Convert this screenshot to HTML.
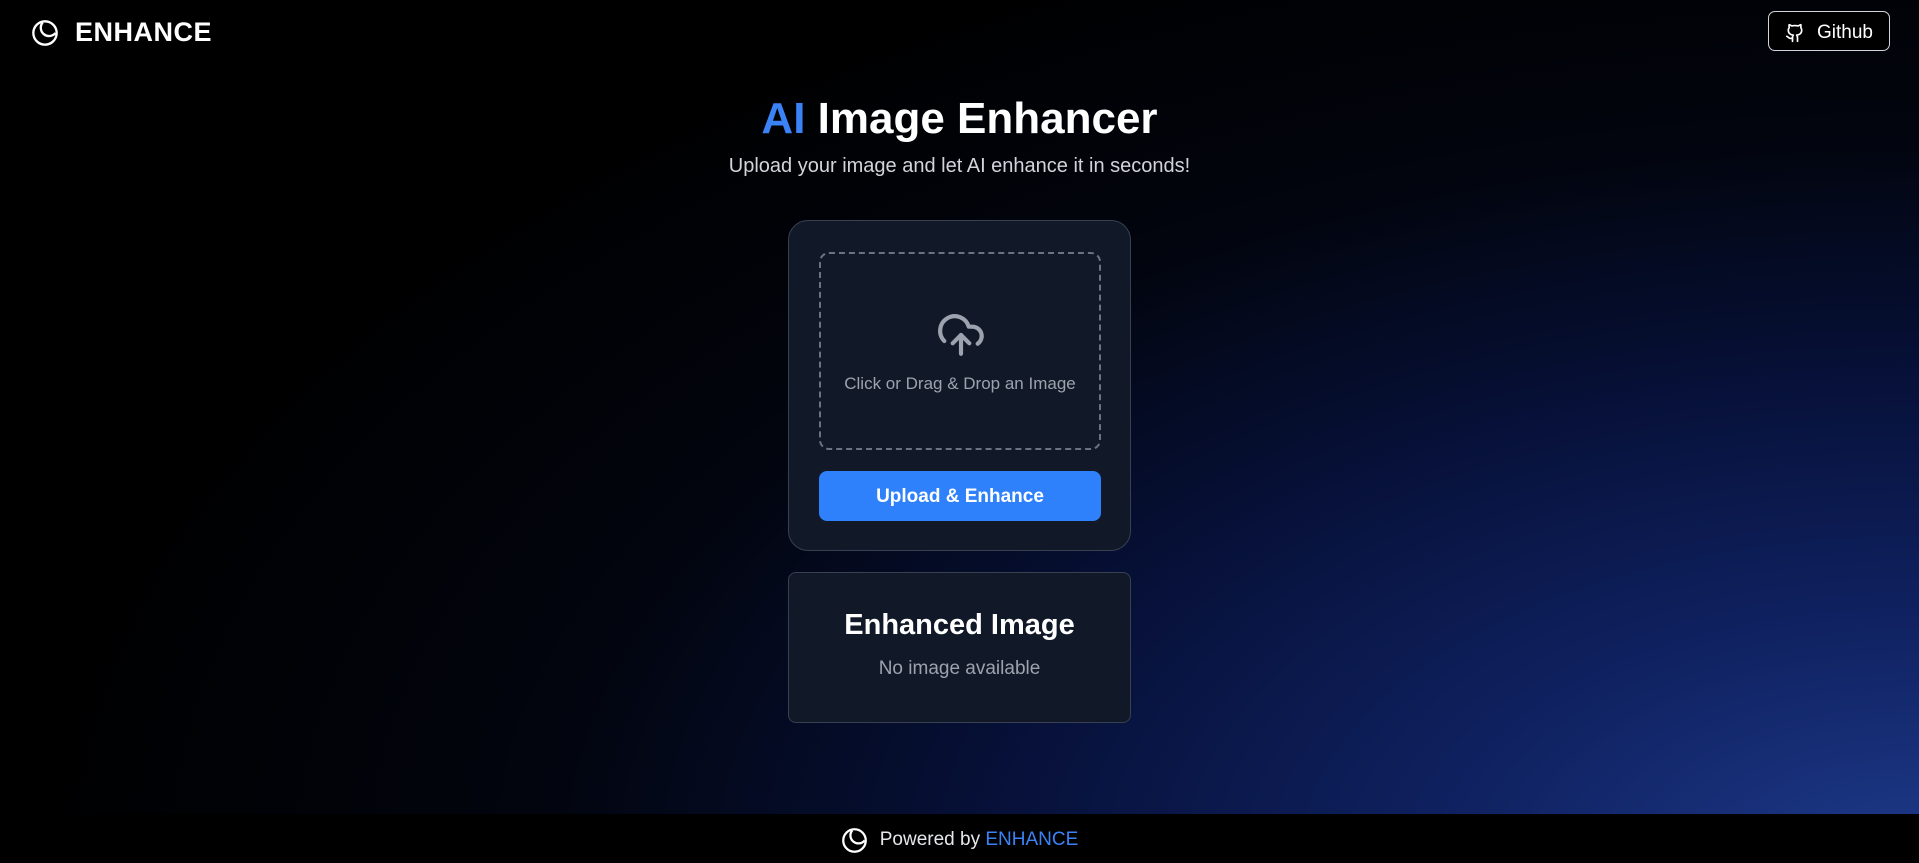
<!DOCTYPE html>
<html><head><meta charset="utf-8"><style>
*{margin:0;padding:0;box-sizing:border-box}
html,body{width:1919px;height:863px;overflow:hidden}
body{font-family:"Liberation Sans",sans-serif;color:#fff;position:relative;
background:radial-gradient(ellipse 1900px 1000px at 1919px 863px,#1e3a8a 0%,#0f2160 25%,#07113a 48%,#02050f 72%,#000 100%);}
.logo{position:absolute;left:31px;top:17px;display:flex;align-items:center;gap:16px;font-weight:bold;font-size:27px;letter-spacing:0.5px}
.gh{position:absolute;left:1768px;top:11px;width:122px;height:40px;border:1.5px solid #d1d5db;border-radius:7px;background:#000;display:flex;align-items:center;justify-content:center;gap:12px;font-size:19px;padding-top:3px}
h1{position:absolute;left:0;right:0;top:94px;text-align:center;font-size:44px;font-weight:bold}
h1 span{color:#3b82f6}
.sub{position:absolute;left:0;right:0;top:155px;text-align:center;font-size:20px;color:#d1d5db}
.card{position:absolute;left:788px;width:343px;background:#111827;border:1px solid #374151;border-radius:20px}
.drop{position:absolute;left:30px;top:31px;width:282px;height:198px;border:2px dashed #6b7280;border-radius:10px;text-align:center}
.drop p{position:absolute;top:120px;left:0;right:0;color:#9ca3af;font-size:17px}
.btn{position:absolute;left:30px;top:250px;width:282px;height:50px;background:#2e80fb;border-radius:8px;text-align:center;line-height:52px;font-weight:bold;font-size:19px}
.c2{top:572px;height:151px;border-radius:8px;text-align:center}
.c2 h2{margin-top:36px;font-size:29px;font-weight:bold}
.c2 p{margin-top:16px;font-size:19px;color:#9ca3af}
.foot{position:absolute;left:0;top:814px;width:1919px;height:49px;background:#000;display:flex;align-items:center;justify-content:center;gap:12px;font-size:19px;color:#e5e7eb;padding-top:3px}
.foot span{color:#3b82f6}
</style></head><body>
<div class="logo"><svg width="28" height="28" viewBox="0 0 24 24" fill="none" stroke="#fff" stroke-width="2"><circle cx="12" cy="12" r="10"/><path d="M10 3 A7 7 0 0 0 21 12"/></svg>ENHANCE</div>
<div class="gh"><svg width="20" height="20" viewBox="0 0 24 24" fill="none" stroke="#fff" stroke-width="2" stroke-linecap="round" stroke-linejoin="round"><path d="M15 22v-4a4.8 4.8 0 0 0-1-3.5c3 0 6-2 6-5.5.08-1.25-.27-2.48-1-3.5.28-1.150.28-2.35 0-3.5 0 0-1 0-3 1.5-2.64-.5-5.36-.5-8 0C6 2 5 2 5 2c-.3 1.15-.3 2.35 0 3.5A5.4 5.4 0 0 0 4 9c0 3.5 3 5.5 6 5.5-.39.49-.68 1.05-.85 1.650-.17.6-.22 1.23-.15 1.85v4"/><path d="M9 18c-4.51 2-5-2-7-2"/></svg>Github</div>
<h1><span>AI</span> Image Enhancer</h1>
<div class="sub">Upload your image and let AI enhance it in seconds!</div>
<div class="card" style="top:220px;height:331px">
<div class="drop"><svg style="position:absolute;left:115px;top:56px" width="50" height="50" viewBox="0 0 24 24" fill="none" stroke="#9ca3af" stroke-width="2" stroke-linecap="round" stroke-linejoin="round"><path d="M4 14.9A7 7 0 1 1 15.7 8h1.8a4.5 4.5 0 0 1 2.5 8.2"/><path d="M12 12v9"/><path d="m16 16-4-4-4 4"/></svg><p>Click or Drag &amp; Drop an Image</p></div>
<div class="btn">Upload &amp; Enhance</div>
</div>
<div class="card c2"><h2>Enhanced Image</h2><p>No image available</p></div>
<div class="foot"><svg width="27" height="27" viewBox="0 0 24 24" fill="none" stroke="#fff" stroke-width="2"><circle cx="12" cy="12" r="10"/><path d="M10 3 A7 7 0 0 0 21 12"/></svg><div>Powered by <span>ENHANCE</span></div></div>
</body></html>
